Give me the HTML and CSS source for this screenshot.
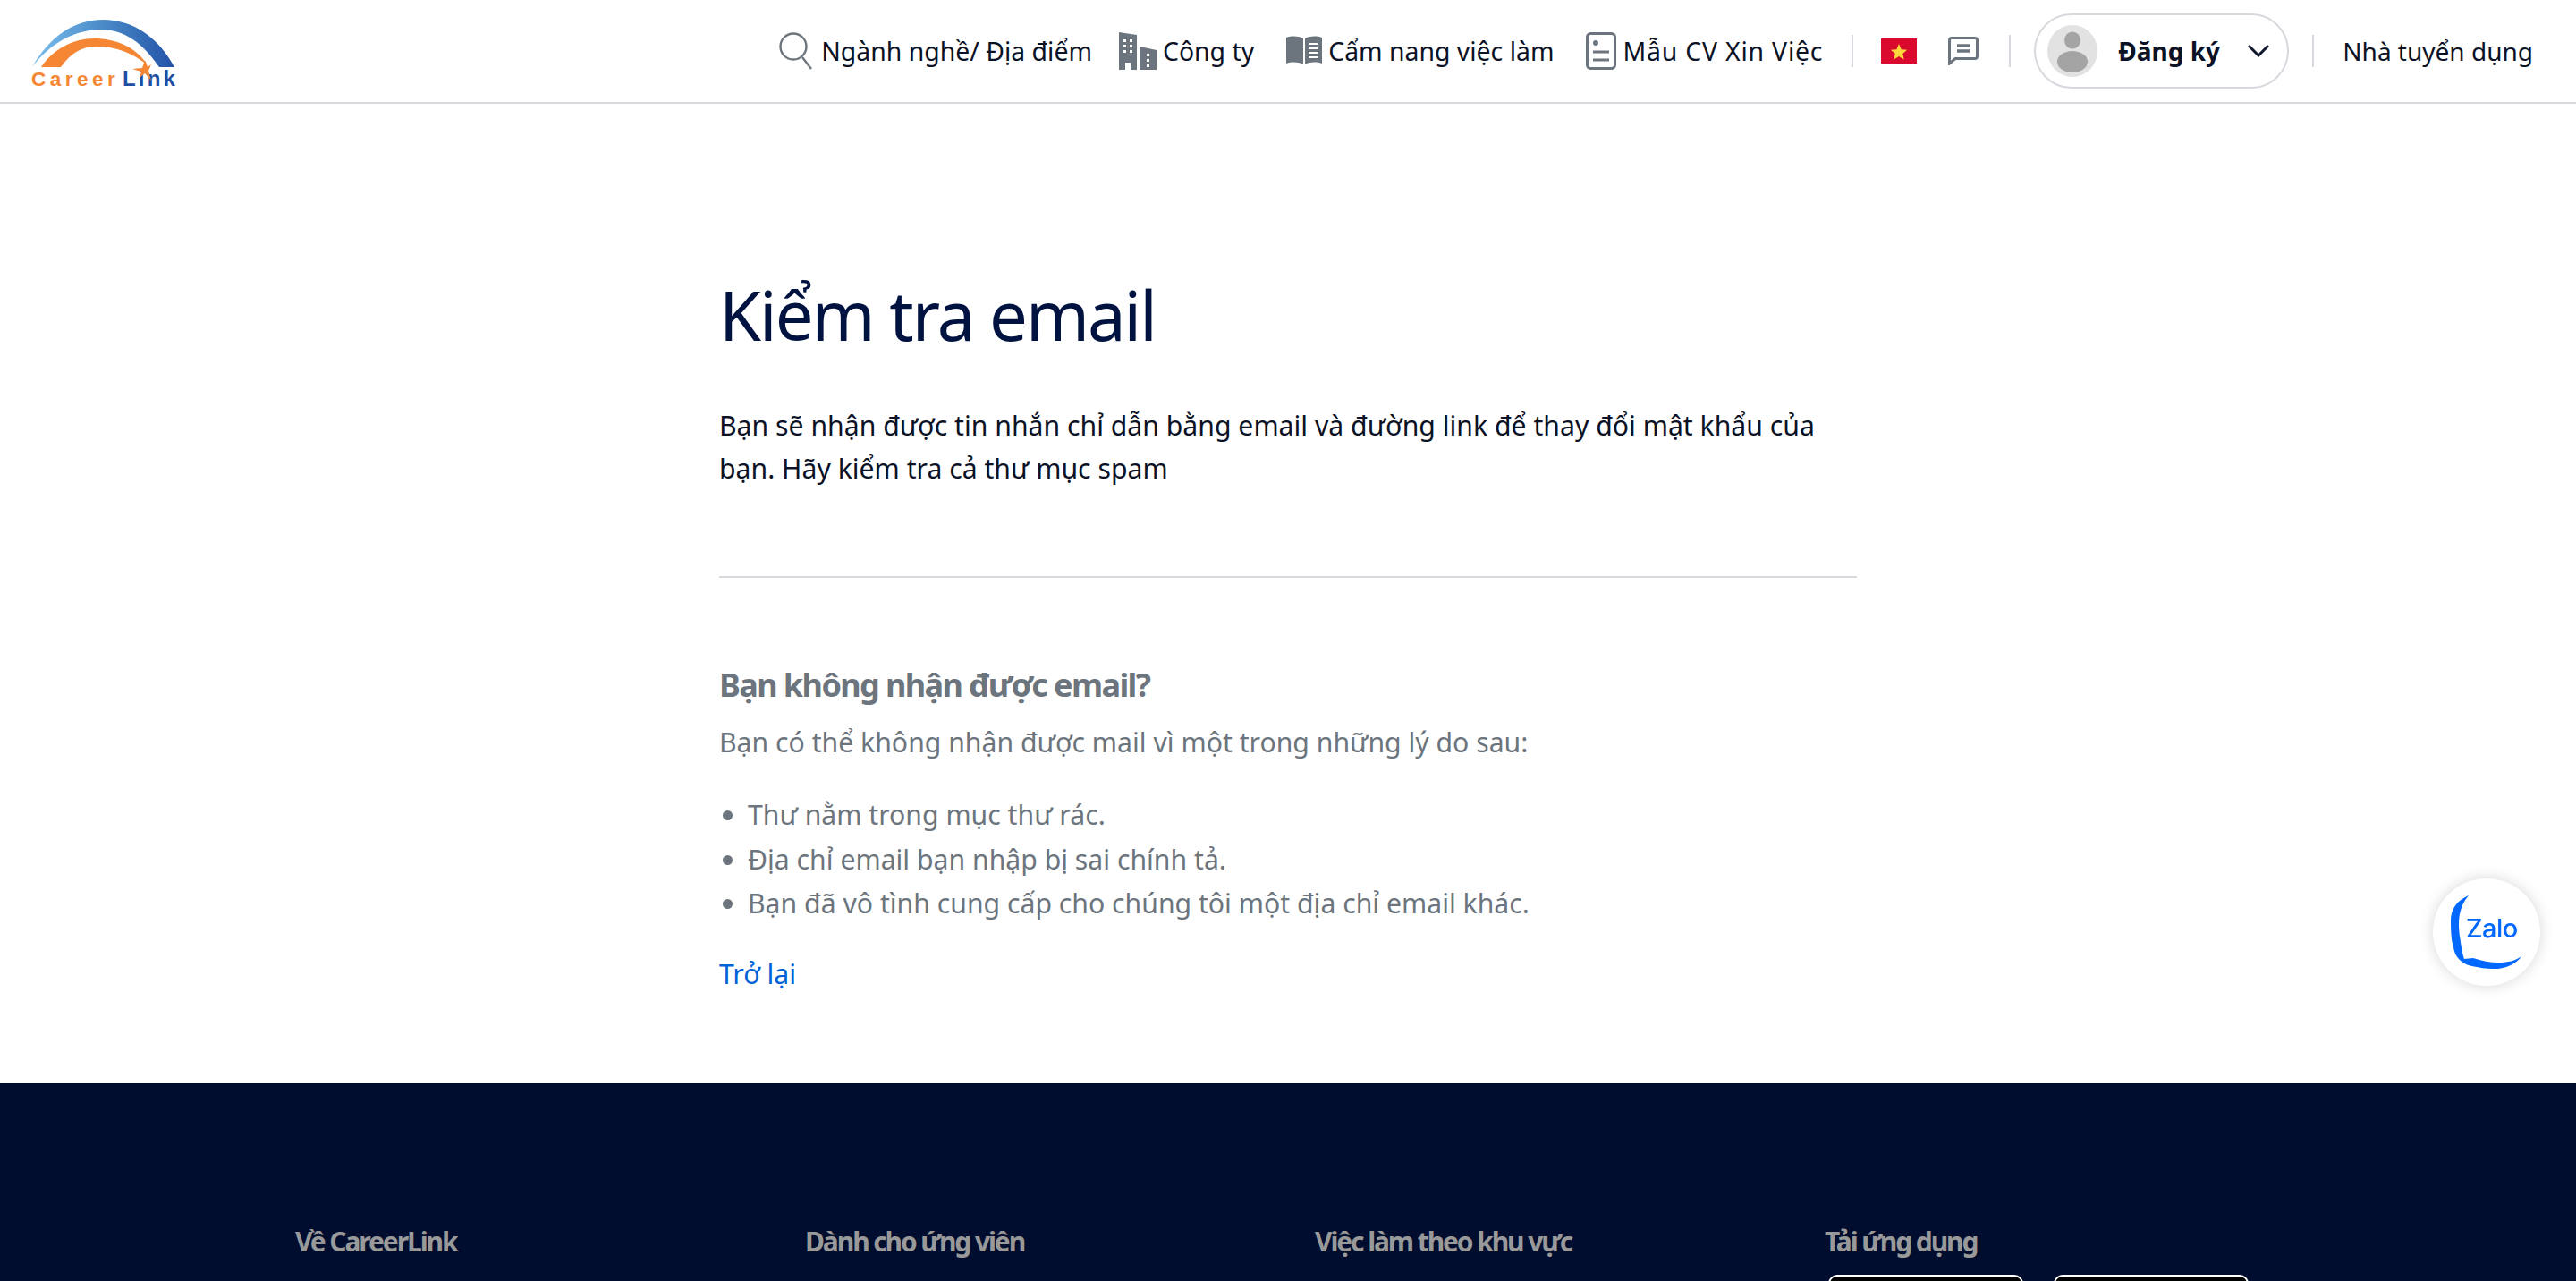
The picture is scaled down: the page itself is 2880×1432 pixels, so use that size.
FILE: index.html
```html
<!DOCTYPE html>
<html lang="vi">
  <head>
    <meta charset="utf-8">
    <title>Kiểm tra email</title>
    <link rel="stylesheet" href="styles.css">
  </head>
  <body>
    <header class="topbar">
      <a class="logo" href="#">
        <svg width="170" height="84" viewBox="0 0 170 84">
          <defs>
            <linearGradient id="arc" x1="0" x2="1" y1="0" y2="0">
              <stop offset="0" stop-color="#7cc0ec"/>
              <stop offset="0.5" stop-color="#4a8ac8"/>
              <stop offset="1" stop-color="#2353a8"/>
            </linearGradient>
          </defs>
          <path d="M1 54C20 20 48 1 80 1C115 1 143 22 160 54H143C125 28 105 12 78 12C50 12 22 26 1 54Z" fill="url(#arc)"/>
          <path d="M11 54C25 33 48 22 70 22C95 22 118 32 130 52C113 38 95 31 73 31C57 31 44 38 33 54Z" fill="#f58634"/>
          <text class="logo-career" x="0" y="75">Career</text>
          <text class="logo-link" x="102" y="75">Link</text>
          <path d="M113 56L124 55L127 46L130 54L134 51L131 58L134 69L127 61L121 66L123 59Z" fill="#f58634"/>
        </svg>
      </a>
      <nav class="nav">
        <a class="nav-item nav-item-first" href="#">
          <svg class="nav-icon" width="40" height="42" viewBox="0 0 40 42" fill="none" stroke="#6c757d" stroke-width="2.4">
            <circle cx="16" cy="16" r="14.5"/>
            <path d="M26 28L36 41"/>
          </svg>
          <span>Ngành nghề/ Địa điểm</span>
        </a>
        <a class="nav-item" href="#">
          <svg class="nav-icon" width="42" height="42" viewBox="0 0 42 42" fill="#6c757d">
            <path d="M0 0L20 3V42H13V34H7V42H0Z"/>
            <path d="M23 16L42 20V42H23Z"/>
            <g fill="#fff">
              <rect x="5" y="8" width="3" height="3"/><rect x="12" y="8" width="3" height="3"/>
              <rect x="5" y="14" width="3" height="3"/><rect x="12" y="14" width="3" height="3"/>
              <rect x="5" y="20" width="3" height="3"/><rect x="12" y="20" width="3" height="3"/>
              <rect x="31" y="24" width="3" height="3"/><rect x="31" y="30" width="3" height="3"/>
              <rect x="31" y="36" width="3" height="3"/>
            </g>
          </svg>
          <span>Công ty</span>
        </a>
        <a class="nav-item" href="#">
          <svg class="nav-icon" width="40" height="36" viewBox="0 0 40 36" fill="#6c757d">
            <path d="M0 3C6 1 13 1 19 4V33C13 30 6 30 0 32Z"/>
            <path d="M21 4C27 1 34 1 40 3V32C34 30 27 30 21 33Z"/>
            <g stroke="#fff" stroke-width="2">
              <path d="M25 10H36M25 15H36M25 20H36M25 25H36"/>
            </g>
          </svg>
          <span>Cẩm nang việc làm</span>
        </a>
        <a class="nav-item nav-item-last" href="#">
          <svg class="nav-icon" width="34" height="42" viewBox="0 0 34 42" fill="none" stroke="#6c757d" stroke-width="3">
            <rect x="1.5" y="1.5" width="31" height="39" rx="4"/>
            <circle cx="11" cy="12" r="3" fill="#6c757d" stroke="none"/>
            <path d="M8 22H26M8 31H26"/>
          </svg>
          <span class="nav-cv">Mẫu CV Xin Việc</span>
        </a>
        <span class="nav-divider"></span>
        <span class="flag">
          <svg width="40" height="28" viewBox="0 0 40 28">
            <rect width="40" height="28" fill="#da0a2e"/>
            <path d="M20 6L22.6 12.2L29.2 12.7L24.2 17L25.7 23.5L20 20L14.3 23.5L15.8 17L10.8 12.7L17.4 12.2Z" fill="#ffd83d"/>
          </svg>
        </span>
        <svg class="chat-icon" width="34" height="32" viewBox="0 0 34 32" fill="none" stroke="#6c757d" stroke-width="3">
          <path d="M4 1.5H30C31.5 1.5 32.5 2.5 32.5 4V22C32.5 23.5 31.5 24.5 30 24.5H8L1.5 30V4C1.5 2.5 2.5 1.5 4 1.5Z"/>
          <path d="M10 10H24M10 16H24" stroke-width="3.5"/>
        </svg>
        <span class="nav-divider"></span>
        <button class="account">
          <svg width="56" height="58" viewBox="0 0 56 58">
            <ellipse cx="28" cy="29" rx="28" ry="29" fill="#e2e2e2"/>
            <ellipse cx="28" cy="17" rx="9" ry="9.5" fill="#a4a4a4"/>
            <ellipse cx="28" cy="41" rx="17" ry="12" fill="#a4a4a4"/>
          </svg>
          <span class="account-label">Đăng ký</span>
          <svg width="24" height="14" viewBox="0 0 24 14" fill="none" stroke="#11182e" stroke-width="3">
            <path d="M1 1L12 12L23 1"/>
          </svg>
        </button>
        <span class="nav-divider"></span>
        <a class="employer" href="#">Nhà tuyển dụng</a>
      </nav>
    </header>

    <main class="content">
      <h1>Kiểm tra email</h1>
      <p class="lead">Bạn sẽ nhận được tin nhắn chỉ dẫn bằng email và đường link để thay đổi mật khẩu của bạn. Hãy kiểm tra cả thư mục spam</p>
      <hr>
      <h2>Bạn không nhận được email?</h2>
      <p class="muted">Bạn có thể không nhận được mail vì một trong những lý do sau:</p>
      <ul class="reasons">
        <li>Thư nằm trong mục thư rác.</li>
        <li>Địa chỉ email bạn nhập bị sai chính tả.</li>
        <li>Bạn đã vô tình cung cấp cho chúng tôi một địa chỉ email khác.</li>
      </ul>
      <a class="back" href="#">Trở lại</a>
    </main>

    <footer class="footer">
      <div class="footer-col"><h3>Về CareerLink</h3></div>
      <div class="footer-col"><h3>Dành cho ứng viên</h3></div>
      <div class="footer-col"><h3>Việc làm theo khu vực</h3></div>
      <div class="footer-col">
        <h3>Tải ứng dụng</h3>
        <div class="stores">
          <span class="store"></span>
          <span class="store"></span>
        </div>
      </div>
    </footer>

    <a class="zalo" href="#">
      <svg width="80" height="82" viewBox="0 0 80 82">
        <path d="M20 0C6 6 0 16 0 28C0 44 1 52 3 58C4 64 6 68 9 71C14 77 22 79 29 80C38 82 46 82 52 82C62 81 73 77 79 68C72 73 64 75 54 75C44 75 34 73 25 70L15 71L14 68C12 60 11 52 10 46C8 30 8 14 20 0Z" fill="#0068ff"/>
        <text class="zalo-text" x="17" y="47">Zalo</text>
      </svg>
    </a>
  </body>
</html>
```

FILE: styles.css
```css
* {
  box-sizing: border-box;
}
html, body {
  margin: 0;
  height: 100%;
  overflow: hidden;
}
body {
  display: flex;
  flex-direction: column;
  font-family: "Noto Sans", sans-serif;
  font-size: 30.2px;
  line-height: 48px;
  color: #0b1225;
  background-color: #fff;
}
a {
  text-decoration: none;
  color: inherit;
}

/* top bar */
.topbar {
  height: 116px;
  flex: none;
  display: flex;
  align-items: center;
  justify-content: space-between;
  padding: 0 48px 0 35px;
  border-bottom: 2px solid #d8d8de;
}
.logo {
  display: flex;
  margin-top: 12px;
}
.logo-career, .logo-link {
  font-family: "Liberation Sans", sans-serif;
  font-weight: 700;
  font-size: 22.5px;
  letter-spacing: 4.5px;
}
.logo-career {
  fill: #f58634;
}
.logo-link {
  fill: #1f4ea3;
  font-size: 24px;
  letter-spacing: 3.2px;
}
.nav {
  display: flex;
  align-items: center;
  font-size: 28px;
}
.nav-item {
  display: flex;
  align-items: center;
  gap: 7px;
  margin-right: 36px;
  font-size: 28.4px;
}
.nav-item-first {
  margin-right: 30px;
}
.nav-item-last {
  margin-right: 32px;
}
.nav-cv {
  letter-spacing: 0.8px;
}
.nav-divider {
  width: 2px;
  height: 36px;
  background-color: #d8d8de;
}
.flag {
  display: flex;
  margin: 0 35px 0 31px;
}
.chat-icon {
  margin-right: 34px;
}
.account {
  display: flex;
  align-items: center;
  width: 285px;
  height: 84px;
  margin: 0 26px;
  padding: 0 20px 0 13px;
  background: #fff;
  border: 2px solid #d8d8de;
  border-radius: 42px;
  font: inherit;
  color: inherit;
}
.account-label {
  flex: 1;
  padding-left: 23px;
  text-align: left;
  font-weight: 700;
}
.employer {
  margin-left: 32px;
}

/* main */
.content {
  flex: 1;
  width: 1272px;
  margin: 0 auto;
  padding-top: 188px;
}
h1 {
  margin: 0 0 52px;
  font-size: 76px;
  line-height: 96px;
  letter-spacing: -2px;
  font-weight: 400;
  color: #00123f;
}
.lead {
  margin: 0;
}
hr {
  margin: 96px 0 0;
  border: none;
  border-top: 2px solid #d8d8de;
}
h2 {
  margin: 90px 0 0;
  font-size: 36px;
  line-height: 60px;
  letter-spacing: -1.6px;
  font-weight: 700;
  color: #6c757d;
}
.muted {
  margin: 10px 0 0;
  color: #6c757d;
}
.reasons {
  margin: 32px 0 0;
  padding: 0 0 0 32px;
  color: #6c757d;
}
.reasons li {
  line-height: 49.5px;
}
.back {
  display: block;
  margin-top: 30px;
  color: #0062d6;
}

/* footer */
.footer {
  flex: none;
  height: 221px;
  overflow: hidden;
  display: grid;
  grid-template-columns: repeat(4, 570px);
  padding: 162px 0 0 330px;
  background-color: #000d2e;
  color: #999;
}
.footer h3 {
  margin: 0;
  font-size: 30px;
  line-height: 30px;
  letter-spacing: -2.1px;
  font-weight: 700;
}
.stores {
  display: flex;
  gap: 34px;
  margin: 22px 0 0 4px;
}
.store {
  width: 218px;
  height: 80px;
  background-color: #000;
  border: 2px solid #fff;
  border-radius: 10px;
}

/* floating zalo button */
.zalo {
  position: fixed;
  left: 2720px;
  top: 982px;
  width: 120px;
  height: 120px;
  display: flex;
  align-items: center;
  justify-content: center;
  background-color: #fff;
  border-radius: 50%;
  box-shadow: 0 0 16px rgba(0, 0, 0, 0.16);
}
.zalo-text {
  font-family: "Inter", sans-serif;
  font-size: 29px;
  font-weight: 500;
  letter-spacing: -0.5px;
  fill: #0068ff;
}
```
